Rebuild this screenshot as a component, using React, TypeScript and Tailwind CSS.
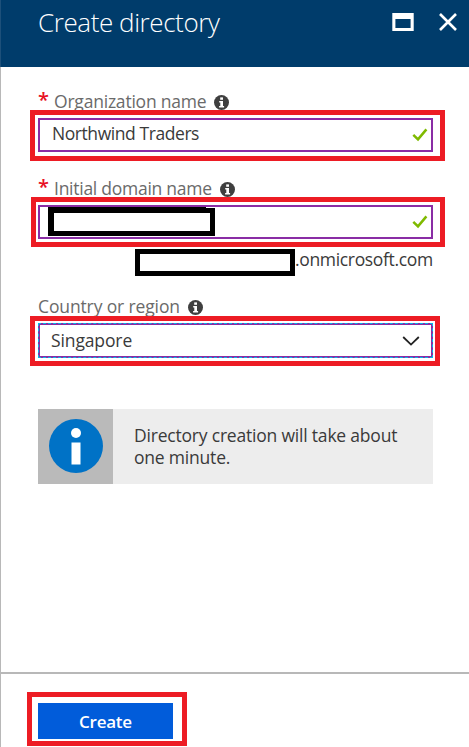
import type { ReactNode } from "react";

function InfoGlyph({ className }: { className: string }) {
  return (
    <svg viewBox="0 0 15 15" className={`absolute h-[15px] w-[15px] ${className}`}>
      <circle cx="7.5" cy="7.5" r="7.5" fill="#3f3f3f" />
      <rect x="6.2" y="2.4" width="2.8" height="2.4" fill="#fff" />
      <path d="M5.2 6H9v5h1.1v1.5H5.1V11h1.2V7.4H5.2z" fill="#fff" />
    </svg>
  );
}

function Check() {
  return (
    <svg viewBox="0 0 16 14" className="mr-[3px] h-[14px] w-4" fill="none">
      <path d="M1.3 6.8 6 11.4 14.4 1.4" stroke="#7fba00" strokeWidth="2.5" />
    </svg>
  );
}

function Highlight({ className }: { className: string }) {
  return <div className={`pointer-events-none absolute border-[5px] border-[#ed1c24] ${className}`} />;
}

function Label({ children, required }: { children: ReactNode; required?: boolean }) {
  return (
    <div className="flex h-[26px] items-center whitespace-nowrap text-[17.5px] leading-[26px] text-[#6a6a6a]">
      {required && <span className="relative -top-px w-[16px] text-[20px] font-semibold text-[#e81123]">*</span>}
      {children}
    </div>
  );
}

export default function App() {
  return (
    <div className="flex h-[747px] w-[469px] flex-col overflow-hidden bg-white font-['Open_Sans','Noto_Sans',sans-serif]">
      <header className="flex h-[67px] shrink-0 items-start border-l border-[#1d507a] bg-[#003c6b] pl-[37px] text-white">
        <h1 className="mt-[4px] whitespace-nowrap text-[26px] leading-[36px] font-light tracking-[-0.42px]">Create directory</h1>
        <div className="ml-auto flex pt-[12px] pr-[11px]">
          <svg viewBox="0 0 22 20" className="mr-[24px] h-5 w-[22px]">
            <path d="M.3 1h21.4v18H.3zM3.4 7v9h15.2V7z" fill="#fff" fillRule="evenodd" />
          </svg>
          <svg viewBox="0 0 20 20" className="h-5 w-5" fill="none">
            <path d="m2 2 16 16M18 2 2 18" stroke="#fff" strokeWidth="2.6" />
          </svg>
        </div>
      </header>
      <main className="flex h-[605px] shrink-0 flex-col border-l border-[#b8b8b8] pt-[21px] pr-[36px] pl-[37px] text-[17.5px] text-[#3a3a3a]">
        <Label required>
          <span className="relative tracking-[-0.21px]">Organization name<InfoGlyph className="top-[7px] -right-[23px]" /></span>
        </Label>
        <div className="relative mt-[4px] flex h-[34px] items-center justify-between border-2 border-[#8a2da5] pl-[12px]">
          <span className="relative -top-[2px] tracking-[-0.43px]">Northwind Traders</span>
          <Check />
          <Highlight className="-top-[10px] -left-[10px] h-[51px] w-[415px]" />
        </div>
        <div className="h-[23px]" />
        <Label required>
          <span className="relative tracking-[-0.26px]">Initial domain name<InfoGlyph className="top-[7px] -right-[23px]" /></span>
        </Label>
        <div className="relative mt-[4px] flex h-[34px] shrink-0 items-center justify-end border-2 border-[#8a2da5]">
          <div className="absolute top-px left-2 h-[28px] w-[167px] border-[5px] border-l-[6px] border-black bg-white" />
          <div className="absolute top-0 left-2 h-px w-[158px] bg-black" />
          <Check />
          <Highlight className="-top-[10px] -left-[9px] h-[50px] w-[414px]" />
        </div>
        <div className="mt-[10px] flex h-[27px] items-center justify-end">
          <div className="h-[27px] w-[160px] border-[5px] border-black" />
          <span className="relative -top-[3px] w-[138px] whitespace-nowrap tracking-[-0.34px]">.onmicrosoft.com</span>
        </div>
        <div className="h-[17px]" />
        <Label>
          <span className="relative tracking-[-0.13px]">Country or region<InfoGlyph className="top-[7px] -right-[23px]" /></span>
        </Label>
        <div className="relative mt-[4px] h-[35px] shrink-0 border border-dashed border-[#00b7e8] bg-[#8a2da5]">
          <div className="m-px flex h-[31px] items-center justify-between bg-white pr-[11px] pl-[11px]">
            <span className="tracking-[-0.12px]">Singapore</span>
            <svg viewBox="0 0 18 12" className="h-3 w-[18px]" fill="none">
              <path d="m1.2 2 7.8 7.6L16.8 2" stroke="#222" strokeWidth="1.8" />
            </svg>
          </div>
          <Highlight className="-top-[8px] -left-[9px] h-[50px] w-[410px]" />
        </div>
        <div className="mt-[51px] flex h-[75px] bg-[#ededed]">
          <div className="flex w-[75px] shrink-0 justify-center bg-[#bababa] pt-[10px]">
            <svg viewBox="0 0 54 54" className="h-[54px] w-[54px]">
              <circle cx="27" cy="27" r="27" fill="#0072c6" />
              <circle cx="27" cy="14" r="5" fill="#fff" />
              <rect x="22.5" y="23.5" width="9" height="22" fill="#fff" />
            </svg>
          </div>
          <p className="pt-[15px] pl-[21px] whitespace-nowrap leading-[22px] tracking-[-0.2px]">Directory creation will take about<br />one minute.</p>
        </div>
      </main>
      <footer className="h-[75px] shrink-0 border-t-2 border-l border-[#b8b8b8] pt-[29px] pl-[37px]">
        <button className="relative flex h-[36px] w-[135px] items-center justify-center bg-[#015cda] text-[17px] font-semibold text-white">
          <span className="relative top-px tracking-[-0.25px]">Create</span>
          <Highlight className="-top-[11px] -left-[11px] h-[54px] w-[160px]" />
        </button>
      </footer>
    </div>
  );
}
